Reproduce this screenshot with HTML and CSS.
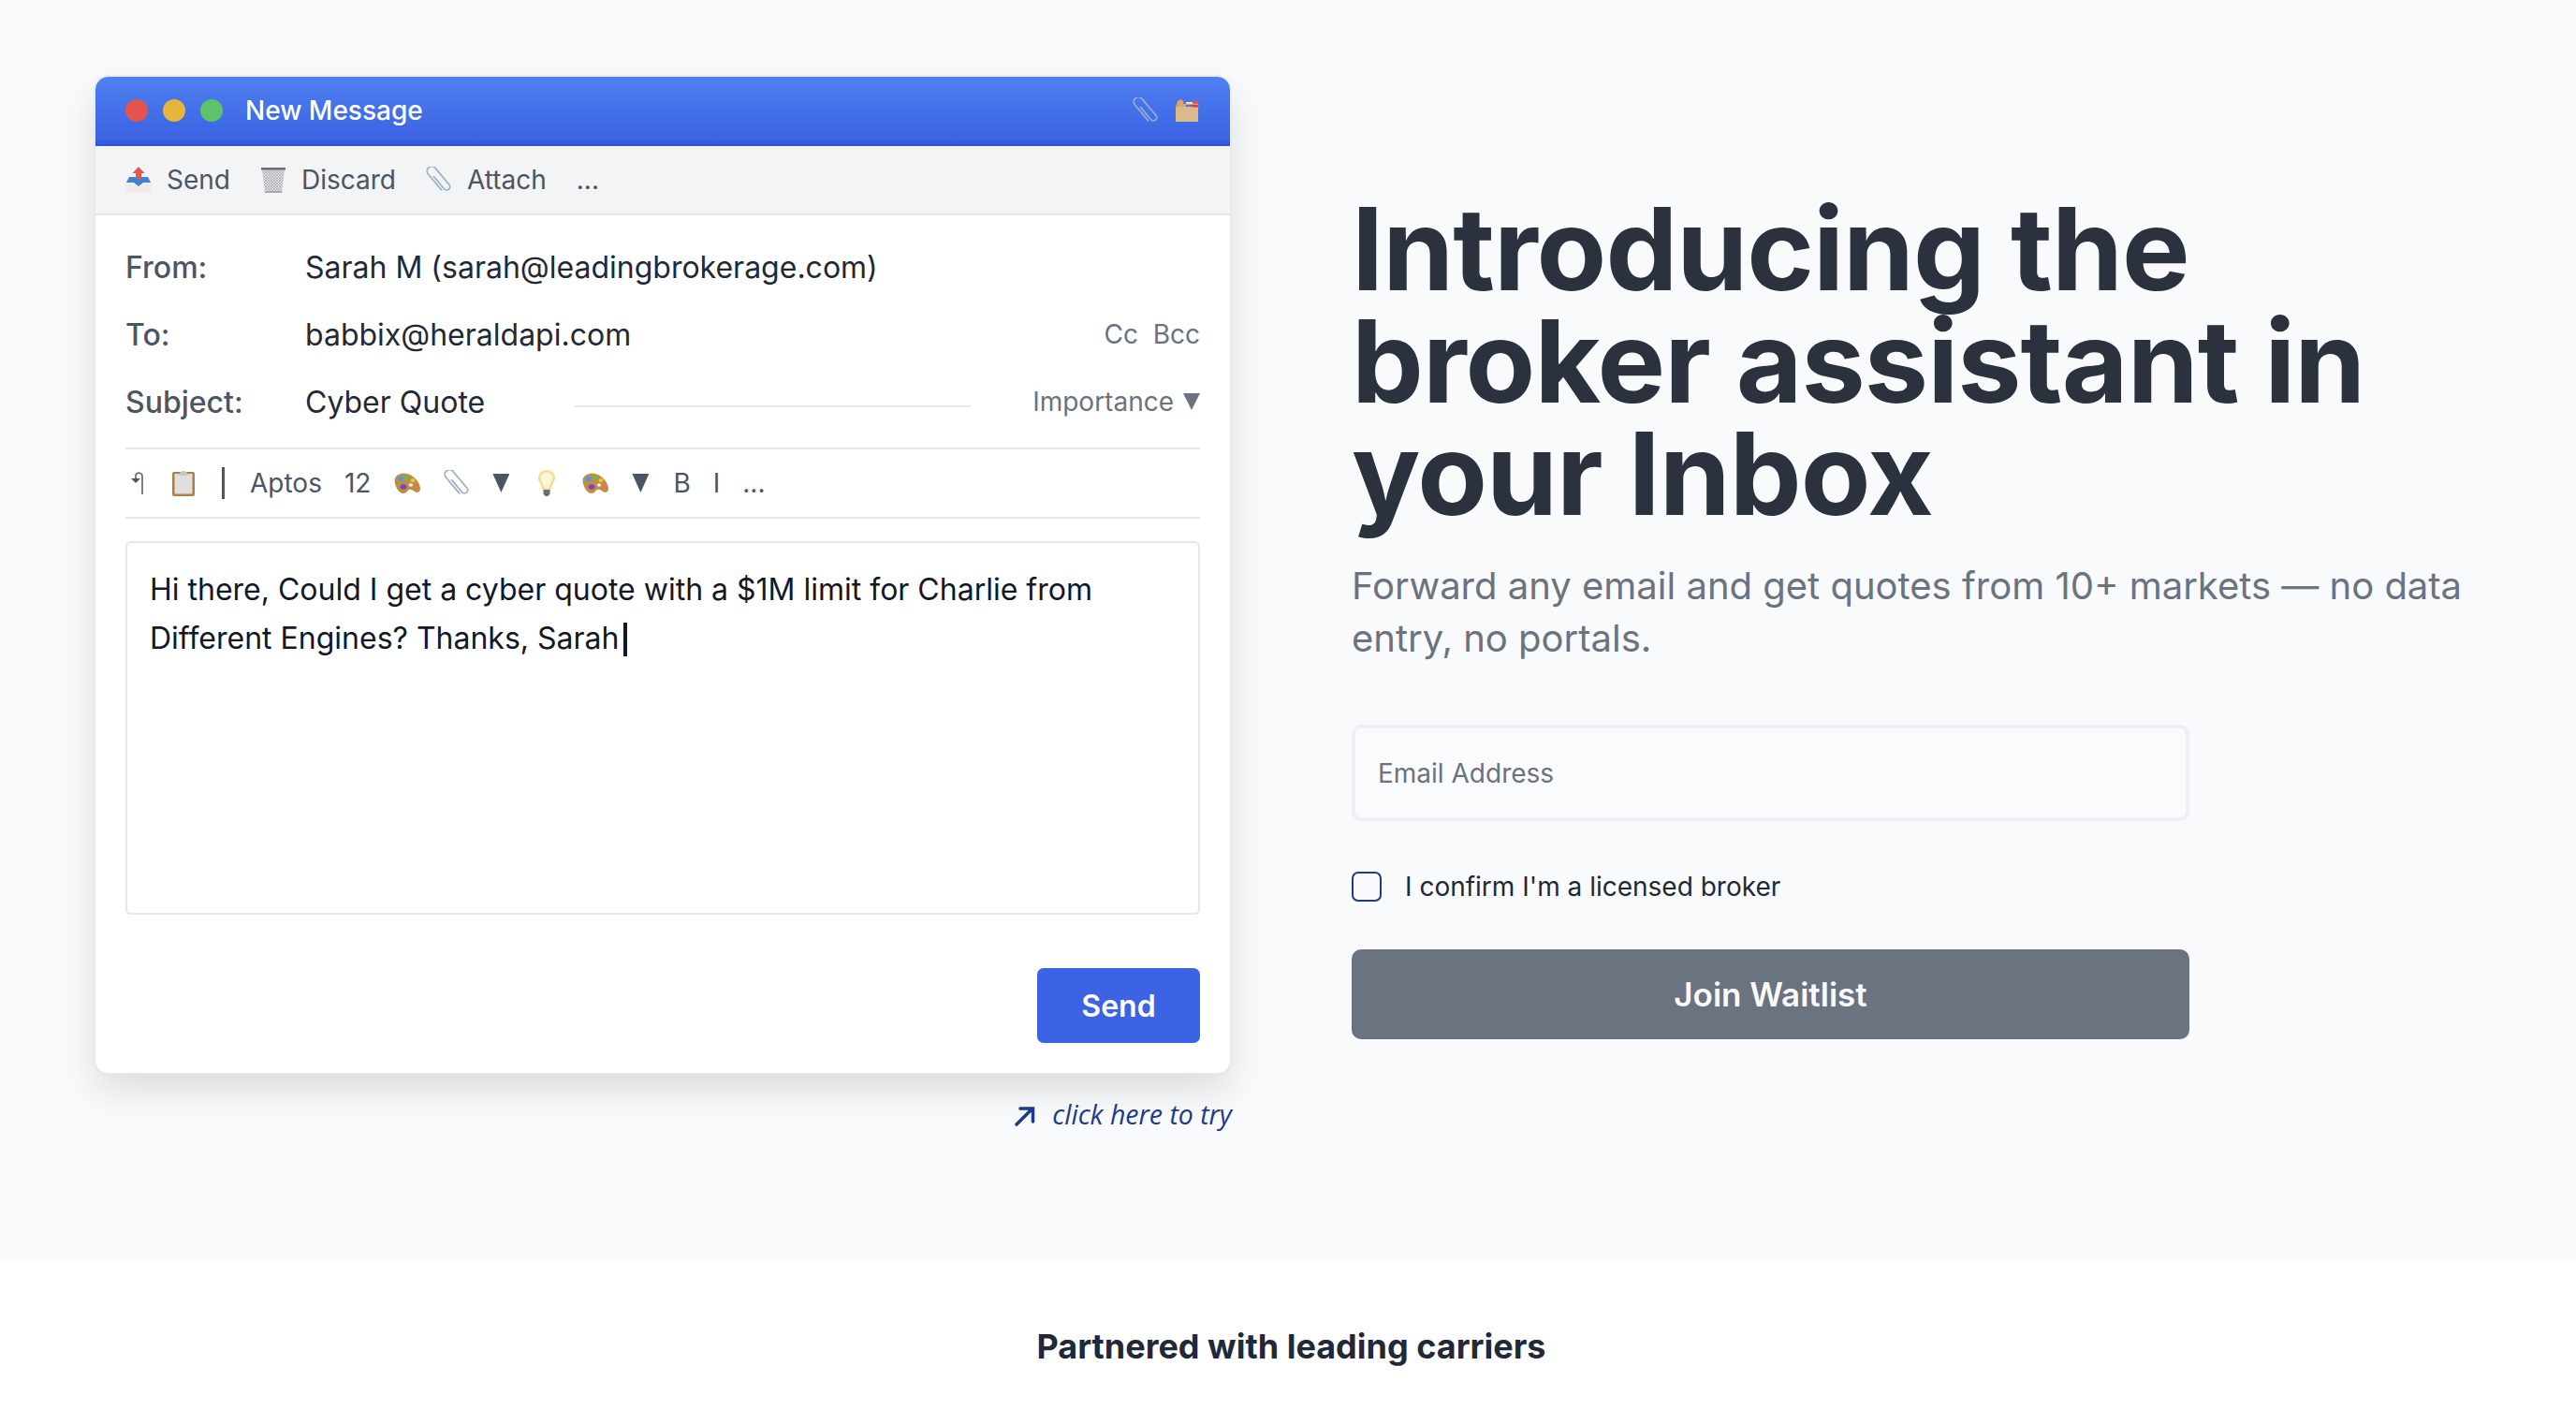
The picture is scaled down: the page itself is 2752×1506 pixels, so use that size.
FILE: index.html
```html
<!DOCTYPE html>
<html lang="en">
<head>
    <meta charset="UTF-8">
    <meta name="viewport" content="width=device-width, initial-scale=1.0">
    <title>Broker assistant in your Inbox</title>
    <link rel="stylesheet" href="styles.css">
</head>
<body>
    <svg class="defs" width="0" height="0" aria-hidden="true">
        <defs>
            <symbol id="clip" viewBox="0 0 28 28">
                <g transform="rotate(-40 14 14)" fill="none" stroke="#9fb2c9" stroke-width="1.800" stroke-linecap="round">
                    <path d="M12 8V25a3.500 3.500 0 0 0 7 0V2a5 5 0 0 0-10 0V24"/>
                </g>
            </symbol>
            <symbol id="palette" viewBox="0 0 30 24">
                <path d="M2 6.500C5 1 13 0 19 3.500c5 3 9.500 8 10 14 .3 4-3.500 5.500-6 3.500-2-1.600-3.500-3-6-2-2 .8-2.500 4-6 4C5 23 .2 12 2 6.500z" fill="#c08d45"/>
                <ellipse cx="8" cy="7.500" rx="3.200" ry="2.500" fill="#4a9be0"/>
                <ellipse cx="14.500" cy="5.500" rx="2.800" ry="2" fill="#5cbf4f"/>
                <ellipse cx="21" cy="9" rx="2.500" ry="2" fill="#e8c83c"/>
                <ellipse cx="11" cy="16" rx="3.400" ry="2.700" fill="#7f3fc0"/>
                <ellipse cx="25.500" cy="15.500" rx="2" ry="2.400" fill="#e8705a"/>
                <ellipse cx="19" cy="14" rx="2.200" ry="1.800" fill="#f6efe2"/>
            </symbol>
            <pattern id="mesh" width="3" height="3" patternUnits="userSpaceOnUse">
                <path d="M0 0l3 3M3 0L0 3" stroke="#9a9fa5" stroke-width=".6"/>
            </pattern>
        </defs>
    </svg>

    <section class="hero">
        <div class="demo">
            <div class="mail-card">
                <div class="title-bar">
                    <span class="dot red"></span>
                    <span class="dot yellow"></span>
                    <span class="dot green"></span>
                    <span class="title-text">New Message</span>
                    <span class="title-icons">
                        <svg class="icon-clip title-clip"><use href="#clip"/></svg>
                        <svg class="icon-box" viewBox="0 0 26 24">
                            <path d="M1 8h24v16H1z" fill="#dbb98a"/>
                            <path d="M1 8l1-3h23l.5 3z" fill="#c9a878"/>
                            <ellipse cx="6" cy="4" rx="3.500" ry="3.500" fill="#e5a35c"/>
                            <path d="M12 3h7v2h-7z" fill="#f0e6d0"/>
                            <path d="M12 6h7v2h-7z" fill="#4e73e0"/>
                            <path d="M19 2h6v3h-6z" fill="#e2574c"/>
                            <path d="M19 6h6v2.500h-6z" fill="#e23d32"/>
                        </svg>
                    </span>
                </div>

                <div class="action-bar">
                    <span class="action">
                        <svg class="icon-28" viewBox="0 0 28 28">
                            <path d="M0 16l4-5h20l4 5v11a1 1 0 0 1-1 1H1a1 1 0 0 1-1-1z" fill="#f1ede6"/>
                            <path d="M4 11h20l3 6h-8l-5 4-5-4H1z" fill="#3f83d8"/>
                            <path d="M14 0l6.500 7H17v6h-6V7H7.500z" fill="#e8574a"/>
                        </svg>
                        Send
                    </span>
                    <span class="action">
                        <svg class="icon-28" viewBox="0 0 28 28">
                            <path d="M2 2h24l-3 26H5z" fill="#dfe1e3"/>
                            <path d="M2 2h24l-3 26H5z" fill="url(#mesh)"/>
                            <path d="M1 1h26v2.500H1z" fill="#6b7076"/>
                            <path d="M5 26h18v2H5z" fill="#a4a8ad"/>
                        </svg>
                        Discard
                    </span>
                    <span class="action">
                        <svg class="icon-28"><use href="#clip"/></svg>
                        Attach
                    </span>
                    <span class="action">...</span>
                </div>

                <div class="mail-body">
                    <div class="field">
                        <span class="field-label">From:</span>
                        <span class="field-value">Sarah M (sarah@leadingbrokerage.com)</span>
                    </div>
                    <div class="field">
                        <span class="field-label">To:</span>
                        <span class="field-value">babbix@heraldapi.com</span>
                        <span class="field-side">Cc&nbsp; Bcc</span>
                    </div>
                    <div class="field">
                        <span class="field-label">Subject:</span>
                        <span class="field-value subject-value">Cyber Quote</span>
                        <span class="subject-line"></span>
                        <span class="field-side">Importance <span class="caret-down small"></span></span>
                    </div>

                    <div class="format-bar">
                        <svg class="icon-undo" viewBox="0 0 16 26">
                            <path d="M14 25V6c0-5-7-5-7-1v3" fill="none" stroke="#6b7280" stroke-width="1.800"/>
                            <path d="M2 8h10l-5 5z" fill="#4b5563"/>
                        </svg>
                        <svg class="icon-board" viewBox="0 0 24 28">
                            <rect y="2" width="24" height="26" rx="2" fill="#a97f4c"/>
                            <rect x="2.500" y="4" width="19" height="21.500" fill="#dfdfdc"/>
                            <path d="M8 4c0-4 8-4 8 0l2 2H6z" fill="#c8c8c8"/>
                        </svg>
                        <span class="format-sep"></span>
                        <span>Aptos</span>
                        <span>12</span>
                        <svg class="icon-palette"><use href="#palette"/></svg>
                        <svg class="icon-28"><use href="#clip"/></svg>
                        <span class="caret-down"></span>
                        <svg class="icon-bulb" viewBox="0 0 18 28">
                            <path d="M9 0c5.500 0 9 3.800 9 8.500 0 4-3.500 6.500-4.500 13h-9C3.500 15 0 12.500 0 8.500 0 3.800 3.500 0 9 0z" fill="#f5dc8e"/>
                            <path d="M9 2.500c4 0 6.500 2.800 6.500 6 0 3.200-3 6-3.800 10.500H6.300C5.500 14.500 2.500 11.700 2.500 8.500c0-3.200 2.500-6 6.500-6z" fill="#fdf6d8"/>
                            <path d="M5.500 21h7v4.500L10.500 28h-3l-2-2.500z" fill="#6b6f75"/>
                        </svg>
                        <svg class="icon-palette"><use href="#palette"/></svg>
                        <span class="caret-down"></span>
                        <span class="bold-btn">B</span>
                        <span>I</span>
                        <span>...</span>
                    </div>

                    <div class="editor">Hi there, Could I get a cyber quote with a $1M limit for Charlie from Different Engines? Thanks, Sarah<span class="caret"></span></div>

                    <div class="send-row">
                        <button class="send-btn">Send</button>
                    </div>
                </div>
            </div>
            <div class="try-note">
                <svg class="try-arrow" viewBox="0 0 22 22">
                    <path d="M2 20 19 3M6 3h13.500v14" fill="none" stroke="#1e3a8a" stroke-width="3.500" stroke-linecap="round"/>
                </svg>
                <span>click here to try</span>
            </div>
        </div>

        <div class="pitch">
            <h1>Introducing the broker assistant in your Inbox</h1>
            <p class="lead">Forward any email and get quotes from 10+ markets — no data entry, no portals.</p>
            <form class="signup">
                <input type="text" class="email-input" placeholder="Email Address">
                <label class="confirm">
                    <span class="checkbox"></span>
                    I confirm I'm a licensed broker
                </label>
                <button type="button" class="join-btn">Join Waitlist</button>
            </form>
        </div>
    </section>

    <section class="partners">
        <h2>Partnered with leading carriers</h2>
    </section>
</body>
</html>
```

FILE: styles.css
```css
* { box-sizing: border-box; }

html, body { height: 100%; }

body {
    margin: 0;
    font-family: Inter, "Liberation Sans", sans-serif;
    background: #fff;
    color: #1f2937;
    overflow: hidden;
}

.defs { position: absolute; }

.hero {
    display: flex;
    gap: 130px;
    height: 1345px;
    padding: 82px 102px 0;
    background: #f9fafb;
}

.demo { width: 1212px; flex-shrink: 0; }

.mail-card {
    height: 1064px;
    background: #fff;
    border-radius: 14px;
    overflow: hidden;
    box-shadow: 0 0 0 2px rgba(229, 231, 235, 0.6), 0 18px 40px rgba(0, 0, 0, 0.12);
}

.title-bar {
    display: flex;
    align-items: center;
    height: 74px;
    padding: 0 33px 2px 32px;
    gap: 16px;
    background: linear-gradient(180deg, #4f80f1 0%, #3a63e2 90%, #2f52d8 100%);
}

.dot { width: 24px; height: 24px; border-radius: 50%; }
.red { background: #e4534c; }
.yellow { background: #e5b53c; }
.green { background: #5dc268; }

.title-text {
    margin-left: 8px;
    color: #fff;
    font-size: 28px;
    font-weight: 500;
}

.title-icons {
    display: flex;
    align-items: center;
    gap: 17px;
    margin-left: auto;
}

.icon-clip { width: 28px; height: 28px; }
.title-clip { opacity: 0.9; }
.icon-box { width: 26px; height: 24px; }
.icon-28 { width: 28px; height: 28px; flex-shrink: 0; }

.action-bar {
    display: flex;
    align-items: center;
    gap: 32px;
    height: 74px;
    padding: 0 32px 1px;
    background: #f3f4f6;
    border-bottom: 2px solid #e5e7eb;
    color: #4b5563;
    font-size: 28px;
}

.action { display: flex; align-items: center; gap: 16px; }

.mail-body { padding: 19px 32px 0; }

.field {
    display: flex;
    align-items: center;
    height: 72px;
}

.field-label {
    width: 192px;
    flex-shrink: 0;
    color: #4b5563;
    font-size: 32px;
    font-weight: 500;
}

.field-value { color: #1f2937; font-size: 32px; }
.subject-value { width: 288px; flex-shrink: 0; }

.subject-line {
    width: 423px;
    height: 2px;
    margin-top: 9px;
    background: #e5e7eb;
}

.field-side {
    display: flex;
    align-items: center;
    gap: 9px;
    margin-left: auto;
    color: #6b7280;
    font-size: 28px;
}

.field-side .caret-down { margin-left: 1px; }

.format-bar {
    display: flex;
    align-items: center;
    gap: 24px;
    height: 76px;
    margin-top: 13px;
    padding-left: 4px;
    border-top: 2px solid #e5e7eb;
    border-bottom: 2px solid #e5e7eb;
    color: #4b5563;
    font-size: 28px;
}

.icon-undo { width: 16px; height: 26px; }
.icon-board { width: 24px; height: 28px; margin-left: 6px; }
.icon-palette { width: 30px; height: 24px; }
.icon-bulb { width: 18px; height: 28px; margin: 0 4px 0 7px; }
.format-sep { width: 3px; height: 34px; margin: 0 3px 0 5px; background: #4b5563; }
.bold-btn { margin-left: 2px; }

.caret-down {
    width: 18px;
    height: 20px;
    background: #4b5563;
    clip-path: polygon(0 0, 100% 0, 50% 100%);
}

.caret-down.small { width: 18px; height: 18px; background: #6b7280; }

.editor {
    height: 399px;
    margin-top: 24px;
    padding: 24px 24px;
    border: 2px solid #e5e7eb;
    border-radius: 6px;
    color: #111827;
    font-size: 32px;
    line-height: 52px;
}

.caret {
    display: inline-block;
    width: 4px;
    height: 36px;
    margin-left: 5px;
    vertical-align: -8px;
    background: #111827;
}

.send-row { display: flex; justify-content: flex-end; margin-top: 57px; }

.send-btn {
    width: 174px;
    height: 80px;
    border: none;
    border-radius: 7px;
    background: #3b63e4;
    color: #fff;
    font-family: inherit;
    font-size: 32px;
    font-weight: 600;
}

.try-note {
    display: flex;
    align-items: center;
    justify-content: flex-end;
    gap: 18px;
    margin-top: 25px;
    margin-right: -2px;
    color: #1e3a8a;
    font-family: "Open Sans", sans-serif;
    font-size: 28.500px;
    font-style: italic;
}

.try-arrow { width: 22px; height: 22px; margin-top: 4px; }

.pitch { flex: 1; min-width: 0; padding-top: 124px; }

h1 {
    margin: 0;
    color: #2b313d;
    font-size: 122px;
    font-weight: 700;
    line-height: 120px;
    letter-spacing: -1px;
}

.lead {
    margin: 32px 0 0;
    color: #6b7280;
    font-size: 40px;
    line-height: 56px;
}

.signup { width: 895px; margin-top: 64px; }

.email-input {
    display: block;
    width: 100%;
    height: 103px;
    padding: 0 24px;
    border: 4px solid #eff0f3;
    border-radius: 10px;
    background: #fafbfc;
    font-family: inherit;
    font-size: 28px;
}

.email-input::placeholder { color: #6b7280; opacity: 1; }

.confirm {
    display: flex;
    align-items: center;
    gap: 25px;
    margin-top: 53px;
    color: #1f2937;
    font-size: 28px;
}

.checkbox {
    width: 32px;
    height: 32px;
    border: 2.500px solid #1e3a8a;
    border-radius: 7px;
}

.join-btn {
    display: block;
    width: 100%;
    height: 96px;
    margin-top: 50px;
    border: none;
    border-radius: 10px;
    background: #6b7280;
    color: #f9fafb;
    font-family: inherit;
    font-size: 35px;
    font-weight: 600;
}

.partners { padding: 71px 0 0 7px; text-align: center; }

.partners h2 {
    margin: 0;
    color: #1f2937;
    font-size: 36px;
    font-weight: 700;
    line-height: 44px;
}
```
